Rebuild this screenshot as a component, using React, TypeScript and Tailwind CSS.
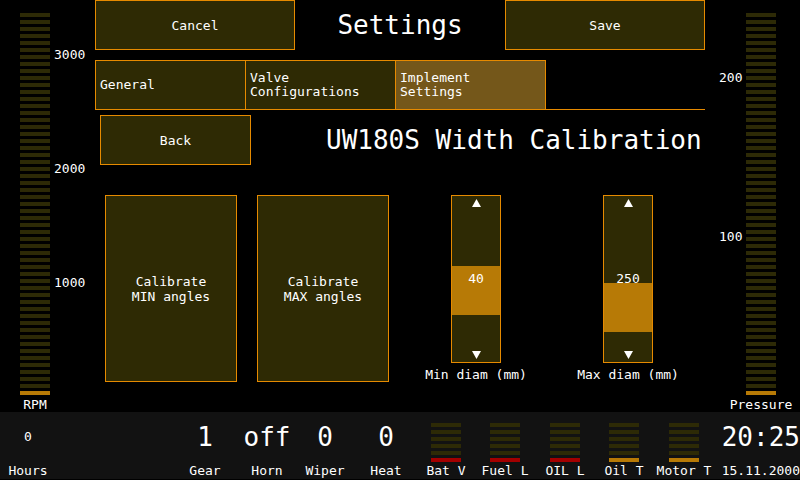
const mono = "font-['DejaVu_Sans_Mono','Liberation_Mono',monospace]";

const GaugeBars = ({ count, lit }: { count: number; lit: string }) => (
  <div className="flex w-[30px] flex-col gap-[3px]">
    {Array.from({ length: count }).map((_, i) => (
      <div key={i} className={`h-[4px] w-[30px] ${i === count - 1 ? lit : 'bg-[#2d2a06]'}`} />
    ))}
  </div>
);

const Btn = ({ children, className }: { children: React.ReactNode; className: string }) => (
  <div className={`flex items-center justify-center border border-[#e68a00] bg-[#2e2a04] text-[13px] leading-[15px] text-white ${className}`}>
    {children}
  </div>
);

const Up = () => (
  <svg width="9" height="8" viewBox="0 0 9 8"><polygon points="4.5,0 9,8 0,8" fill="#fff" /></svg>
);
const Down = () => (
  <svg width="9" height="8" viewBox="0 0 9 8"><polygon points="0,0 9,0 4.5,8" fill="#fff" /></svg>
);

const Slider = ({ value, top, label }: { value: string; top: number; label: string }) => (
  <div className="flex w-[120px] flex-col items-center">
    <div className="relative h-[168px] w-[50px] border border-[#e68a00] bg-[#2e2a04]">
      <div className="absolute left-0 right-0 h-[49px] bg-[#b77a06]" style={{ top }} />
      <div className="relative flex h-full flex-col items-center justify-between pt-[3px] pb-[3px] text-[13px] leading-[14px] text-white">
        <Up />
        <span>{value}</span>
        <Down />
      </div>
    </div>
    <div className="mt-[4px] whitespace-nowrap text-[13px] leading-[15px] text-white">{label}</div>
  </div>
);

const MiniGauge = ({ label, lit, w }: { label: string; lit: string; w: string }) => (
  <div className={`flex flex-col items-center ${w}`}>
    <div className="flex h-[50px] items-end">
      <GaugeBars count={6} lit={lit} />
    </div>
    <div className="flex h-[17px] items-center whitespace-nowrap text-[13px]">{label}</div>
  </div>
);

const Stat = ({ value, label, w, big = true }: { value: string; label: string; w: string; big?: boolean }) => (
  <div className={`flex flex-col items-center ${w}`}>
    <div className={`flex h-[50px] items-center whitespace-nowrap ${big ? 'text-[26px] leading-[30px]' : 'text-[13px]'}`}>{value}</div>
    <div className="flex h-[17px] items-center whitespace-nowrap text-[13px]">{label}</div>
  </div>
);

export default function App() {
  return (
    <div className={`flex h-[480px] w-[800px] flex-col overflow-hidden bg-black text-white ${mono}`}>
      <div className="flex h-[412px]">
        {/* RPM gauge */}
        <div className="relative w-[95px] shrink-0">
          <div className="ml-[20px] mt-[13px]">
            <GaugeBars count={55} lit="bg-[#b77a06]" />
          </div>
          <div className="ml-[20px] mt-[2px] w-[30px] text-center text-[13px] leading-[15px]">RPM</div>
          <span className="absolute left-[54px] top-[48px] text-[13px] leading-[14px]">3000</span>
          <span className="absolute left-[54px] top-[162px] text-[13px] leading-[14px]">2000</span>
          <span className="absolute left-[54px] top-[276px] text-[13px] leading-[14px]">1000</span>
        </div>

        {/* center */}
        <div className="flex w-[610px] shrink-0 flex-col">
          <div className="flex h-[50px]">
            <Btn className="w-[200px]">Cancel</Btn>
            <div className="flex w-[210px] items-center justify-center text-[26px]">Settings</div>
            <Btn className="w-[200px]">Save</Btn>
          </div>

          <div className="mt-[10px] flex h-[50px] text-[13px] leading-[14px]">
            <div className="flex w-[150px] items-center border-y border-l border-[#e68a00] bg-[#2e2a04] pl-[4px]">General</div>
            <div className="flex w-[150px] items-center border-y border-l border-[#e68a00] bg-[#2e2a04] pl-[4px]">Valve<br />Configurations</div>
            <div className="flex w-[151px] items-center border border-[#e68a00] bg-[#74571a] pl-[4px]">Implement<br />Settings</div>
            <div className="flex-1 border-b border-[#e68a00]" />
          </div>

          <div className="mt-[5px] flex h-[50px] items-center">
            <Btn className="ml-[5px] h-[50px] w-[151px]">Back</Btn>
            <div className="ml-[75px] whitespace-nowrap text-[26px]">UW180S Width Calibration</div>
          </div>

          <div className="mt-[30px] flex items-start">
            <Btn className="ml-[10px] h-[187px] w-[132px] text-center">Calibrate<br />MIN angles</Btn>
            <Btn className="ml-[20px] h-[187px] w-[132px] text-center">Calibrate<br />MAX angles</Btn>
            <div className="ml-[27px]">
              <Slider value="40" top={70} label="Min diam (mm)" />
            </div>
            <div className="ml-[32px]">
              <Slider value="250" top={87} label="Max diam (mm)" />
            </div>
          </div>
        </div>

        {/* Pressure gauge */}
        <div className="relative flex-1">
          <div className="ml-[41px] mt-[13px]">
            <GaugeBars count={55} lit="bg-[#b77a06]" />
          </div>
          <div className="ml-[41px] mt-[2px] w-[30px] whitespace-nowrap text-center text-[13px] leading-[15px]">
            <span className="-ml-[30px] inline-block w-[90px]">Pressure</span>
          </div>
          <span className="absolute left-[14px] top-[71px] text-[13px] leading-[14px]">200</span>
          <span className="absolute left-[14px] top-[230px] text-[13px] leading-[14px]">100</span>
        </div>
      </div>

      {/* bottom bar */}
      <div className="flex h-[67px] bg-[#121212]">
        <Stat value="0" label="Hours" w="w-[56px]" big={false} />
        <div className="w-[124px]" />
        <Stat value="1" label="Gear" w="w-[50px]" />
        <Stat value="off" label="Horn" w="w-[74px]" />
        <Stat value="0" label="Wiper" w="w-[42px]" />
        <Stat value="0" label="Heat" w="w-[80px]" />
        <MiniGauge label="Bat V" lit="bg-[#a30000]" w="w-[40px]" />
        <MiniGauge label="Fuel L" lit="bg-[#a30000]" w="w-[78px]" />
        <MiniGauge label="OIL L" lit="bg-[#a30000]" w="w-[42px]" />
        <MiniGauge label="Oil T" lit="bg-[#b77a06]" w="w-[76px]" />
        <MiniGauge label="Motor T" lit="bg-[#b77a06]" w="w-[44px]" />
        <div className="w-[14px]" />
        <div className="flex w-[80px] flex-col items-end">
          <div className="flex h-[50px] items-center text-[26px] leading-[30px]">20:25</div>
          <div className="flex h-[17px] items-center text-[13px]">15.11.2000</div>
        </div>
      </div>
    </div>
  );
}
